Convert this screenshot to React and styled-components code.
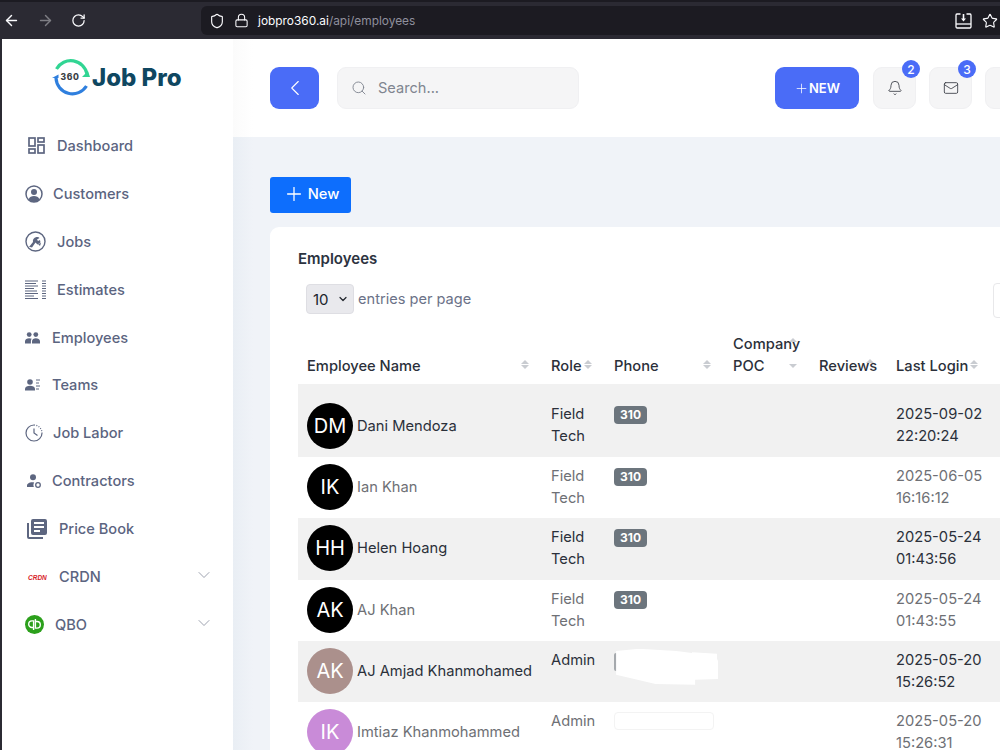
import React from 'react';
import styled, { createGlobalStyle } from 'styled-components';
import { ArrowLeft, ArrowRight, RotateCw, Shield, Lock, Star, ChevronLeft, ChevronDown, Search, Bell, Mail, Plus } from 'lucide-react';

const Global = createGlobalStyle`
  html, body { margin: 0; padding: 0; width: 1000px; height: 750px; overflow: hidden; background: #f0f3f8; }
  #root { height: 750px; }
  * { box-sizing: border-box; }
  body { font-family: Inter, "Liberation Sans", sans-serif; }
`;

const Page = styled.div`display: flex; flex-direction: column; width: 1000px; height: 750px; overflow: hidden;`;
const BrowserBar = styled.div`
  height: 39px; flex: none; background: #2b2a33; border-top: 2px solid #1c1b22;
  display: flex; align-items: center; padding: 0 0 0 3px; color: #fbfbfe;
`;
const NavIcons = styled.div`display: flex; align-items: center; gap: 17px; width: 198px; svg:nth-child(2) { opacity: .4; }`;
const UrlBar = styled.div`
  flex: 1; height: 29px; background: #1c1b22; border-radius: 6px 0 0 6px; display: flex; align-items: center;
  padding-left: 8px; gap: 9px; font-size: 11.9px;
`;
const Host = styled.span`color: #fbfbfe;`;
const UrlPath = styled.span`color: #8f8f9d;`;
const UrlRight = styled.div`margin-left: auto; display: flex; align-items: center; gap: 10px; margin-right: 2px;`;

const Body = styled.div`flex: 1; display: flex; min-height: 0; border-left: 2px solid #2b2a33;`;
const Sidebar = styled.aside`width: 231px; flex: none; background: #fff; padding-top: 18px;`;
const Logo = styled.div`display: flex; align-items: center; height: 40px; padding-left: 50px; margin-bottom: 25px;`;
const LogoText = styled.span`
  font-family: Inter, sans-serif; font-weight: 800; font-size: 24px; letter-spacing: 0; color: #0f4761; margin: 1px 0 0 0;
`;
const Menu = styled.nav`display: flex; flex-direction: column;`;
const Item = styled.div`
  height: 47.9px; display: flex; align-items: center; color: #5b6480; font-size: 14.6px; font-weight: 500;
  padding-left: 23px; padding-right: 19px;
`;
const ItemIcon = styled.span`
  display: flex; align-items: center; width: ${p => p.$w}px; padding-left: ${p => p.$off}px; flex: none; color: #5d6680;
`;
const Caret = styled(ChevronDown)`margin: -3px 0 0 auto; color: #8a90a0;`;

const Main = styled.main`flex: 1; min-width: 0; display: flex; flex-direction: column;`;
const Header = styled.header`
  height: 98px; flex: none; background: linear-gradient(to right, #fbfbfb, #fff 20px); display: flex; align-items: center; padding: 0 0 0 37px;
  > * { flex: none; }
`;
const BackBtn = styled.button`
  width: 49px; height: 42px; border: 0; border-radius: 9px; background: #4a6cf7; color: #fff;
  display: flex; align-items: center; justify-content: center; padding: 0;
`;
const SearchBox = styled.div`
  width: 242px; height: 42px; margin-left: 18px; border-radius: 9px; background: #f5f5f6; border: 1px solid #f0f0f2;
  display: flex; align-items: center; padding-left: 13px; gap: 11px; color: #808590; font-size: 14.6px;
`;
const NewTop = styled.button`
  width: 84px; height: 42px; margin-left: 196px; border: 0; border-radius: 9px; background: #4a6cf7; color: #fff;
  font: 600 13px Inter, sans-serif; display: flex; align-items: center; justify-content: center; padding: 0;
`;
const IconBtn = styled.div`
  width: 43px; height: 42px; border-radius: 9px; background: #f5f5f6; border: 1px solid #f0f0f2; margin-left: ${p => p.$ml || 13}px;
  display: flex; align-items: center; justify-content: center; position: relative; color: #3c4048;
`;
const Badge = styled.span`
  position: absolute; top: -8px; right: -5px; width: 18px; height: 18px; border-radius: 50%; background: #4a6cf7;
  color: #fff; font-size: 12px; font-weight: 500; display: flex; align-items: center; justify-content: center;
`;

const Content = styled.div`flex: 1; min-height: 0; background: linear-gradient(to right, #e9eef4, #f0f3f8 20px); padding: 40px 0 0 37px;`;
const NewBtn = styled.button`
  width: 81px; height: 36px; border: 0; border-radius: 3px; background: #0d6efd; color: #fff;
  font: 500 14.7px Inter, sans-serif; display: flex; align-items: center; justify-content: center; gap: 3px; padding: 0 0 2px 1px;
`;
const Card = styled.section`
  margin-top: 14px; background: #fff; border-radius: 9px 0 0 0; padding: 23px 0 0 28px; height: 600px; overflow: hidden; position: relative;
`;
const Title = styled.h2`margin: 0; font-size: 15px; font-weight: 600; color: #2c3340; line-height: 18px;`;
const Entries = styled.div`
  display: flex; align-items: center; gap: 4px; margin: 16px 0 0 8px; color: #6b7288; font-size: 14.6px; height: 30px;
`;
const SelectBox = styled.div`
  width: 48px; height: 30px; background: #e9e9ed; border: 1px solid #dedee3; border-radius: 4px; color: #20242c;
  display: flex; align-items: center; justify-content: space-between; padding: 0 4px 0 6px; font-size: 15px;
`;
const SearchStub = styled.div`
  position: absolute; left: 723px; top: 56px; width: 20px; height: 35px; border: 1px solid #e8e8ea; border-radius: 4px 0 0 4px;
`;
const Table = styled.table`
  margin-top: 4px; border-collapse: collapse; table-layout: fixed; width: 702px; color: #2b303a; font-size: 14.7px;
`;
const Th = styled.th`
  position: relative; text-align: left; font-weight: 500; line-height: 22px; vertical-align: bottom; padding: 0 9px 7px; height: 66px; color: #2b303a;
`;
const Sort = styled.span`
  position: absolute; display: flex; flex-direction: column; gap: ${p => p.$gap || 1}px; left: ${p => p.$x}px; top: ${p => p.$y}px;
  &::before, &::after { content: ""; width: 0; height: 0; border-left: 4px solid transparent; border-right: 4px solid transparent; }
  &::before { border-bottom: 4px solid #c9ccd1; }
  &::after { border-top: 4px solid ${p => p.$up ? 'transparent' : '#c9ccd1'}; }
`;
const Tr = styled.tr`
  background: ${p => p.$odd ? '#f1f1f1' : '#fff'};
  color: ${p => p.$odd ? '#2b303a' : '#6e7075'};
  height: ${p => p.$first ? 73 : 61.25}px;
`;
const NameTd = styled.td`
  vertical-align: top; padding: ${p => (p.$first ? 19 : 7)}px 9px 0;
`;
const Td = styled.td`
  vertical-align: top; padding: ${p => (p.$first ? 19 : 8)}px 9px 0; line-height: 22px;
`;
const NameCell = styled.div`display: flex; align-items: center; gap: 4px; white-space: nowrap;`;
const Avatar = styled.span`
  width: 46px; height: 46px; border-radius: 50%; background: ${p => p.$bg}; color: #fff; font-size: 20px;
  display: flex; align-items: center; justify-content: center; flex: none;
`;
const Pill = styled.span`
  display: inline-block; background: #6c757d; color: #fff; font-size: 12px; font-weight: 700; line-height: 18px;
  height: 18px; width: 33px; text-align: center; border-radius: 4px; vertical-align: top; margin-top: 3px;
`;
const RedactWrap = styled.div`
  position: relative; width: 104px; height: 36px;
  &::before { content: ""; position: absolute; left: 0; top: 4px; width: 3px; height: 18px; background: #a5a9ad; border-radius: 2px 0 0 2px; }
`;
const Blob = styled.div`
  position: absolute; inset: 0; background: #fff;
  clip-path: polygon(2% 6%, 24% 0, 60% 6%, 75% 12%, 75% 10%, 99% 14%, 99% 28%, 100% 34%, 100% 84%, 78% 86%, 78% 100%, 40% 98%, 2% 72%);
`;
const SoftMask = styled.div`
  width: 100px; height: 18px; background: #fff; border-radius: 4px; margin-top: 2px; border: 1px solid #f3f3f3;
`;

const DashIcon = () => (
  <svg width="17" height="17" viewBox="0 0 17 17" fill="none" stroke="currentColor" strokeWidth="1.7">
    <rect x="1" y="1" width="6" height="8" /><rect x="10" y="1" width="6" height="4" />
    <rect x="1" y="12" width="6" height="4" /><rect x="10" y="8" width="6" height="8" />
  </svg>
);
const CustIcon = () => (
  <svg width="18" height="18" viewBox="0 0 18 18" fill="none" stroke="currentColor" strokeWidth="1.5">
    <circle cx="9" cy="9" r="8" /><circle cx="9" cy="7" r="3" fill="currentColor" stroke="none" />
    <path d="M3.5 14.5c1-3 3-3.6 5.5-3.6s4.500.6 5.500 3.600c-1.500 1.600-3.300 2.500-5.500 2.500s-4-.9-5.500-2.500z" fill="currentColor" stroke="none" />
  </svg>
);
const JobsIcon = () => (
  <svg width="21" height="21" viewBox="0 0 21 21" fill="none" stroke="currentColor" strokeWidth="1.4">
    <circle cx="10.500" cy="10.500" r="9.500" />
    <path d="M4 16l4-5c-.6-2 .6-4.500 3.500-5 1.500-.2 2.500.2 3 1l-2.500 1.500 1 1.500 2-1 .5 2.500-3 2-2-2-3.500 5-2-.5z" fill="currentColor" stroke="none" />
    <path d="M13 13l3-1-1 3z" fill="currentColor" stroke="none" />
  </svg>
);
const EstIcon = () => (
  <svg width="21" height="20" viewBox="0 0 21 20" stroke="currentColor" strokeWidth="1.1">
    <path d="M0 1h13M0 3.500h11M0 6h13M0 8.500h9M0 11h12M0 13.500h13M0 16h9M0 18.500h13" />
    <path d="M17 1h4M17 3.500h4M17 6h4M17 8.500h4M17 11h4M17 13.500h4M17 16h4M17 18.500h4" />
  </svg>
);
const PeopleIcon = () => (
  <svg width="15" height="12" viewBox="0 0 15 12" fill="currentColor">
    <circle cx="4.200" cy="2.600" r="2.400" /><circle cx="10.800" cy="2.600" r="2.400" />
    <path d="M0 11.500V9.200c0-2 2-3 4.200-3 1 0 1.900.2 2.600.6-.6.600-.9 1.400-.9 2.300v2.400z" />
    <path d="M7 11.500V9.200c0-2 1.800-3 3.800-3s4.200 1 4.200 3v2.300z" />
  </svg>
);
const TeamsIcon = () => (
  <svg width="15" height="12" viewBox="0 0 15 12" fill="currentColor">
    <circle cx="5" cy="3" r="2.800" />
    <path d="M0 11.500V9.800c0-2 2.500-3 5-3s5 1 5 3v1.700z" />
    <path d="M11 1h4M11 4h3M11 7h4M11 10h3" stroke="currentColor" strokeWidth="1" />
  </svg>
);
const ClockIcon = () => (
  <svg width="18" height="18" viewBox="0 0 18 18" fill="none" stroke="currentColor" strokeWidth="1.2">
    <path d="M9 1a8 8 0 1 0 8 8" />
    <path d="M9 1a8 8 0 0 1 8 8" strokeDasharray="1 1.400" />
    <path d="M9 4.500V9l3.500 2.500" />
  </svg>
);
const ContractorIcon = () => (
  <svg width="14" height="14" viewBox="0 0 14 14" fill="currentColor">
    <circle cx="6" cy="3.200" r="3" />
    <path d="M0 13v-1.500c0-2 2.500-3.300 5-3.300 1 0 1.600.1 2.200.4-.5.700-.8 1.500-.8 2.400 0 .7.200 1.400.5 2z" />
    <circle cx="11" cy="11" r="2.300" fill="none" stroke="currentColor" strokeWidth="1.300" />
  </svg>
);
const BookIcon = () => (
  <svg width="20" height="20" viewBox="0 0 20 20" fill="currentColor">
    <path d="M0 4h2v14h14v2H2a2 2 0 0 1-2-2z" />
    <path fillRule="evenodd" d="M6 0h12a2 2 0 0 1 2 2v12a2 2 0 0 1-2 2H6a2 2 0 0 1-2-2V2a2 2 0 0 1 2-2zm1 3v2h10V3zm0 4v2h10V7zm0 4v2h6v-2z" />
  </svg>
);
const CrdnIcon = () => (
  <svg width="20" height="8" viewBox="0 0 20 8">
    <text x="1" y="6.500" fontFamily="Liberation Sans, sans-serif" fontWeight="700" fontStyle="italic" fontSize="6.500" fill="#d8232a">CRDN</text>
  </svg>
);
const QboIcon = () => (
  <svg width="19" height="19" viewBox="0 0 19 19" fill="none">
    <circle cx="9.500" cy="9.500" r="9.500" fill="#2ca01c" />
    <path d="M8.600 15V5.900H7a3.300 3.300 0 0 0 0 6.600h1.600" stroke="#fff" strokeWidth="1.400" />
    <path d="M10.400 4v9.100H12a3.300 3.300 0 0 0 0-6.600h-1.600" stroke="#fff" strokeWidth="1.400" />
  </svg>
);
const DownloadIcon = () => (
  <svg width="17" height="16" viewBox="0 0 17 16" fill="none" stroke="currentColor" strokeWidth="1.300">
    <path d="M5.500 1H2a1.200 1.200 0 0 0-1 1.200v11.600A1.200 1.200 0 0 0 2 15h13a1.200 1.200 0 0 0 1-1.200V2.200A1.200 1.200 0 0 0 15 1h-3.500" />
    <path d="M1 11h15" />
    <path d="M6 5.500h1.700V1h1.600v4.500H11L8.500 8.500z" fill="currentColor" stroke="none" />
  </svg>
);
const LogoMark = () => (
  <svg width="40" height="38" viewBox="0 0 40 38" fill="none">
    <path d="M4.500 11A16.500 16.500 0 0 1 35 16" stroke="#31d593" strokeWidth="3.200" />
    <path d="M30 19h8l-2-6z" fill="#31d593" />
    <path d="M4 20a16.500 16.500 0 0 0 30.500 8" stroke="#2f7fde" strokeWidth="3.200" />
    <path d="M0 20h6.500V16.500z" fill="#2f7fde" />
    <text x="8.500" y="22" fontFamily="Inter, sans-serif" fontWeight="800" fontSize="8.500" fill="#3b3f46" letterSpacing=".6">360</text>
  </svg>
);

const menu = [
  ['Dashboard', 32, 3, <DashIcon />],
  ['Customers', 28, 0, <CustIcon />],
  ['Jobs', 32, 0, <JobsIcon />],
  ['Estimates', 32, 0, <EstIcon />],
  ['Employees', 27, 0, <PeopleIcon />],
  ['Teams', 27, 0, <TeamsIcon />],
  ['Job Labor', 28, 0, <ClockIcon />],
  ['Contractors', 27, 2, <ContractorIcon />],
  ['Price Book', 34, 2, <BookIcon />],
  ['CRDN', 34, 2, <CrdnIcon />, true],
  ['QBO', 30, 0, <QboIcon />, true],
];

const rows = [
  ['DM', '#000', 'Dani Mendoza', 'Field Tech', 'pill', '2025-09-02', '22:20:24'],
  ['IK', '#000', 'Ian Khan', 'Field Tech', 'pill', '2025-06-05', '16:16:12'],
  ['HH', '#000', 'Helen Hoang', 'Field Tech', 'pill', '2025-05-24', '01:43:56'],
  ['AK', '#000', 'AJ Khan', 'Field Tech', 'pill', '2025-05-24', '01:43:55'],
  ['AK', '#ab908c', 'AJ Amjad Khanmohamed', 'Admin', 'solid', '2025-05-20', '15:26:52'],
  ['IK', '#c98bd8', 'Imtiaz Khanmohammed', 'Admin', 'soft', '2025-05-20', '15:26:31'],
];

const widths = [244, 63, 119, 86, 77, 113];

export default function App() {
  return (
    <Page>
      <Global />
      <BrowserBar>
        <NavIcons>
          <ArrowLeft size={17} /><ArrowRight size={17} /><RotateCw size={15} />
        </NavIcons>
        <UrlBar>
          <Shield size={16} strokeWidth={1.7} />
          <Lock size={15} strokeWidth={1.7} />
          <span><Host>jobpro360.ai</Host><UrlPath>/api/employees</UrlPath></span>
          <UrlRight>
            <DownloadIcon />
            <Star size={16} strokeWidth={1.7} />
          </UrlRight>
        </UrlBar>
      </BrowserBar>
      <Body>
        <Sidebar>
          <Logo><LogoMark /><LogoText>Job Pro</LogoText></Logo>
          <Menu>
            {menu.map(([label, w, off, icon, caret]) => (
              <Item key={label}>
                <ItemIcon $w={w} $off={off}>{icon}</ItemIcon>
                {label}
                {caret && <Caret size={20} strokeWidth={1} />}
              </Item>
            ))}
          </Menu>
        </Sidebar>
        <Main>
          <Header>
            <BackBtn><ChevronLeft size={26} strokeWidth={1} /></BackBtn>
            <SearchBox><Search size={16} strokeWidth={1.4} />Search...</SearchBox>
            <NewTop><Plus size={15} strokeWidth={1.2} />NEW</NewTop>
            <IconBtn $ml={14}><Bell size={16} strokeWidth={1.3} /><Badge>2</Badge></IconBtn>
            <IconBtn><Mail size={16} strokeWidth={1.3} /><Badge>3</Badge></IconBtn>
            <IconBtn />
          </Header>
          <Content>
            <NewBtn><Plus size={22} strokeWidth={1.4} />New</NewBtn>
            <Card>
              <Title>Employees</Title>
              <Entries>
                <SelectBox>10<ChevronDown size={12} strokeWidth={2.4} /></SelectBox>
                entries per page
              </Entries>
              <SearchStub />
              <Table>
                <colgroup>{widths.map((w, i) => <col key={i} style={{ width: w }} />)}</colgroup>
                <thead>
                  <tr>
                    <Th>Employee Name<Sort $x={223} $y={42} /></Th>
                    <Th>Role<Sort $x={42} $y={42} /></Th>
                    <Th>Phone<Sort $x={98} $y={42} /></Th>
                    <Th>Company POC<Sort $x={65} $y={20} $gap={22} /></Th>
                    <Th>Reviews<Sort $x={56} $y={41} $up /></Th>
                    <Th>Last Login<Sort $x={83} $y={42} /></Th>
                  </tr>
                </thead>
                <tbody>
                  {rows.map(([ini, bg, name, role, phone, d, t], i) => (
                    <Tr key={i} $odd={i % 2 === 0} $first={i === 0}>
                      <NameTd $first={i === 0}><NameCell><Avatar $bg={bg}>{ini}</Avatar>{name}</NameCell></NameTd>
                      <Td $first={i === 0}>{role}</Td>
                      <Td $first={i === 0}>
                        {phone === 'pill' && <Pill>310</Pill>}
                        {phone === 'solid' && <RedactWrap><Blob /></RedactWrap>}
                        {phone === 'soft' && <SoftMask />}
                      </Td>
                      <Td $first={i === 0} />
                      <Td $first={i === 0} />
                      <Td $first={i === 0}>{d}<br />{t}</Td>
                    </Tr>
                  ))}
                </tbody>
              </Table>
            </Card>
          </Content>
        </Main>
      </Body>
    </Page>
  );
}
